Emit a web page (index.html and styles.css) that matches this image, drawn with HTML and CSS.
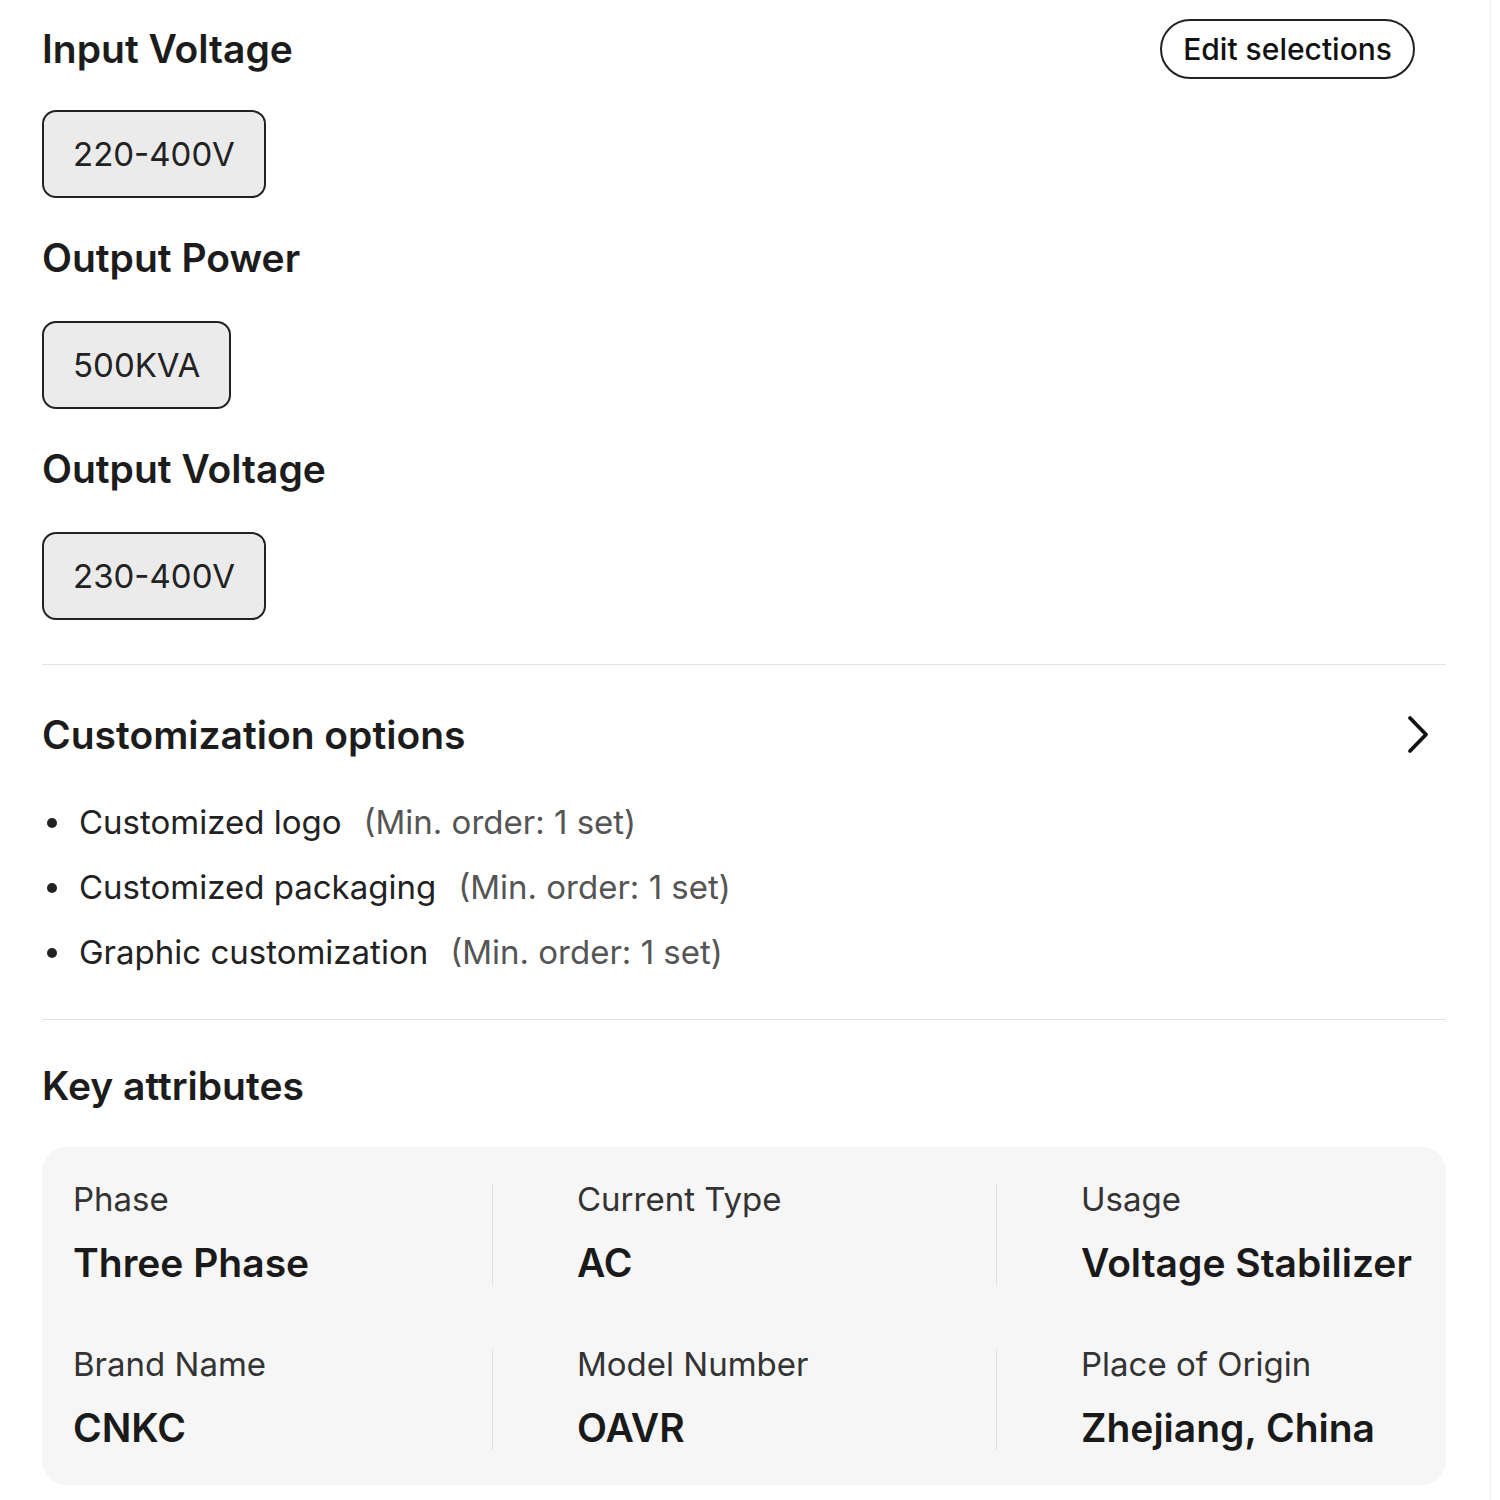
FILE: index.html
```html
<!DOCTYPE html>
<html>
<head>
    <title>Product options</title>
    <link rel="stylesheet" href="styles.css">
</head>
<body>
    <div class="page">
        <div class="header-row">
            <h2 class="title">Input Voltage</h2>
            <button class="edit-btn">Edit selections</button>
        </div>
        <div class="chip first-chip">220-400V</div>

        <div class="option-group">
            <h2 class="title">Output Power</h2>
            <div class="chip">500KVA</div>
        </div>

        <div class="option-group">
            <h2 class="title">Output Voltage</h2>
            <div class="chip">230-400V</div>
        </div>

        <hr class="divider">

        <div class="custom-head">
            <h2 class="title">Customization options</h2>
            <svg class="chevron" width="26" height="40" viewBox="0 0 26 40">
                <path d="M6 3 L22 19.5 L6 36" fill="none" stroke="#111" stroke-width="3.8" stroke-linecap="round" stroke-linejoin="round"/>
            </svg>
        </div>
        <ul class="custom-list">
            <li>Customized logo<span class="moq">(Min. order: 1 set)</span></li>
            <li>Customized packaging<span class="moq">(Min. order: 1 set)</span></li>
            <li>Graphic customization<span class="moq">(Min. order: 1 set)</span></li>
        </ul>

        <hr class="divider divider-tight">

        <h2 class="title key-title">Key attributes</h2>
        <div class="attr-card">
            <div class="attr">
                <div class="attr-label">Phase</div>
                <div class="attr-value">Three Phase</div>
            </div>
            <div class="attr">
                <div class="attr-label">Current Type</div>
                <div class="attr-value">AC</div>
            </div>
            <div class="attr">
                <div class="attr-label">Usage</div>
                <div class="attr-value">Voltage Stabilizer</div>
            </div>
            <div class="attr">
                <div class="attr-label">Brand Name</div>
                <div class="attr-value">CNKC</div>
            </div>
            <div class="attr">
                <div class="attr-label">Model Number</div>
                <div class="attr-value">OAVR</div>
            </div>
            <div class="attr">
                <div class="attr-label">Place of Origin</div>
                <div class="attr-value">Zhejiang, China</div>
            </div>
        </div>
    </div>
</body>
</html>
```

FILE: styles.css
```css
body {
    margin: 0;
    padding: 0;
    background: #fff;
    font-family: Inter, "Noto Sans", sans-serif;
    color: #1a1a1a;
}

.page {
    width: 1491px;
    box-sizing: border-box;
    padding: 19px 44px 0 42px;
    border-right: 1px solid #f0f0f0;
    min-height: 1500px;
}

.title {
    margin: 0;
    font-size: 39px;
    line-height: 40px;
    font-weight: 600;
    color: #1c1c1c;
}

.header-row {
    display: flex;
    justify-content: space-between;
    align-items: center;
    height: 60px;
    padding-right: 31px;
}

.edit-btn {
    height: 60px;
    padding: 0 21px;
    border: 2px solid #222;
    border-radius: 30px;
    background: #fff;
    font-family: Inter, sans-serif;
    font-size: 30px;
    font-weight: 500;
    color: #111;
}

/* 선택된 옵션 칩 */
.chip {
    display: inline-flex;
    align-items: center;
    height: 88px;
    box-sizing: border-box;
    padding: 0 29px;
    margin-top: 43px;
    border: 2px solid #222;
    border-radius: 14px;
    background: #ebebeb;
    font-size: 33px;
    color: #222;
}

.first-chip {
    margin-top: 31px;
}

.option-group {
    margin-top: 40px;
}

.divider {
    border: none;
    border-top: 1px solid #e2e2e2;
    margin: 44px 0 0;
}

.divider-tight {
    margin-top: 34px;
}

.custom-head {
    display: flex;
    justify-content: space-between;
    align-items: center;
    margin-top: 50px;
    padding-right: 16px;
}

.custom-list {
    list-style: none;
    margin: 35px 0 0;
    padding: 0;
}

.custom-list li {
    display: flex;
    align-items: center;
    line-height: 65px;
    font-size: 33px;
    color: #222;
}

.custom-list li::before {
    content: "";
    width: 10px;
    height: 10px;
    border-radius: 50%;
    background: #222;
    margin: 0 22px 0 5px;
}

.moq {
    margin-left: 22px;
    color: #555;
}

.key-title {
    margin-top: 46px;
}

.attr-card {
    margin-top: 41px;
    background: #f6f6f6;
    border-radius: 24px;
    padding: 37px 31px 35px;
    display: grid;
    grid-template-columns: 420px 420px 1fr;
    column-gap: 84px;
    row-gap: 64px;
}

.attr:nth-child(3n+1),
.attr:nth-child(3n+2) {
    border-right: 1px solid #dedede;
}

.attr-label {
    font-size: 33px;
    line-height: 30px;
    color: #333;
}

.attr-value {
    margin-top: 27px;
    font-size: 39px;
    line-height: 44px;
    font-weight: 600;
    color: #1a1a1a;
}
```
